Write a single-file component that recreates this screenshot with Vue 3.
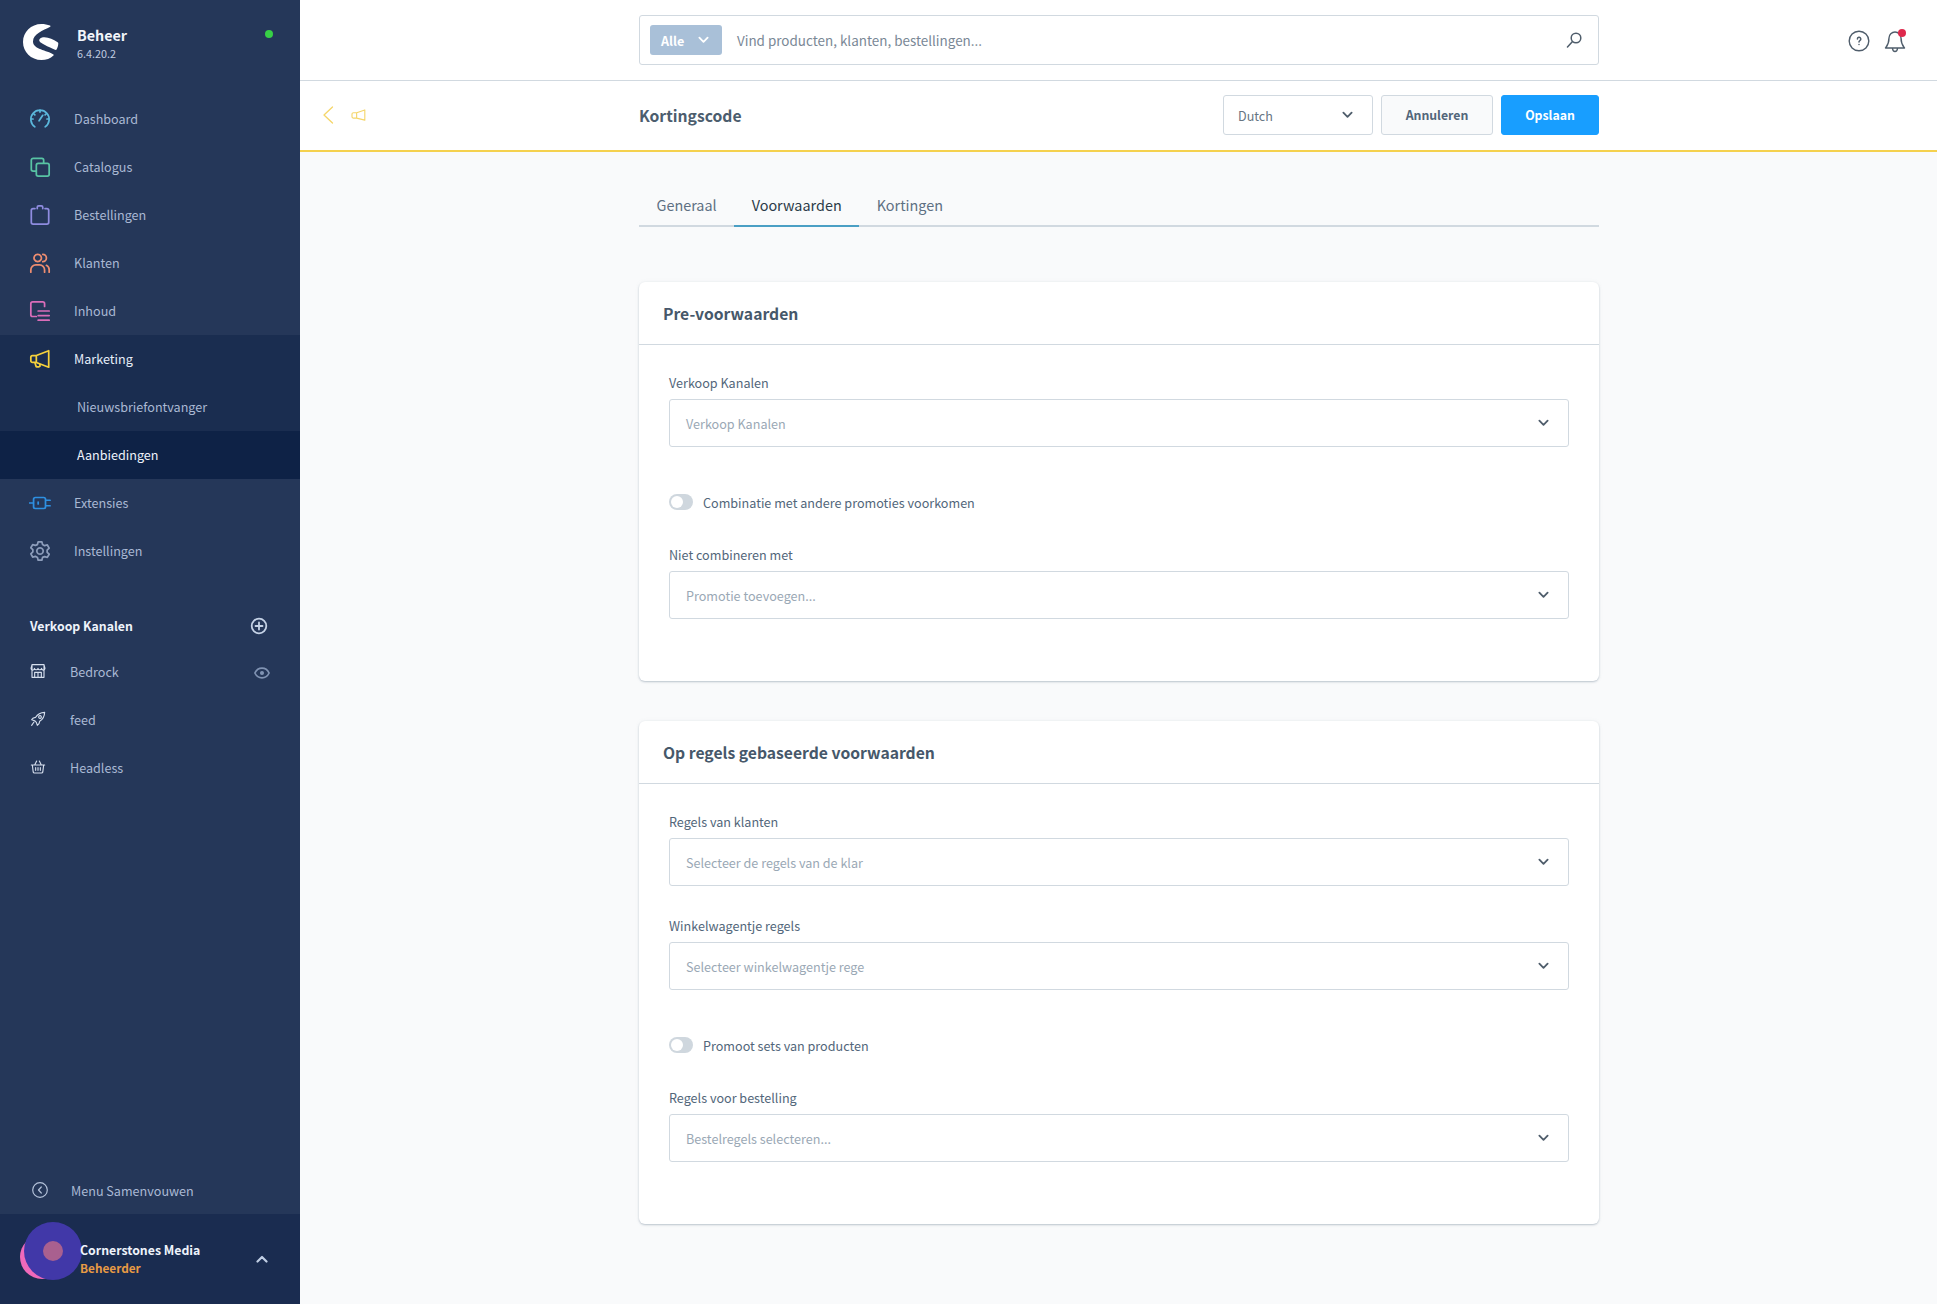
<script setup>
const main = [
  { label: 'Dashboard', color: '#5bb8dc', d: 'M6.4 20.6A10 10 0 1 1 17.6 20.6M12 2v2.4M2.2 12h2.2M19.6 12h2.2M11 14l4-6M5 6l1.4 1.4M19 6l-1.4 1.4' },
  { label: 'Catalogus', color: '#58c4a4', d: 'M7.5 16.5H4.5a2 2 0 0 1-2-2V4.5a2 2 0 0 1 2-2H14a2 2 0 0 1 2 2V7.5M10 8h10a2 2 0 0 1 2 2v10a2 2 0 0 1-2 2H10a2 2 0 0 1-2-2V10a2 2 0 0 1 2-2Z' },
  { label: 'Bestellingen', color: '#8f8ce0', d: 'M6.5 5H4.5a2 2 0 0 0-2 2v13a2 2 0 0 0 2 2h15a2 2 0 0 0 2-2V7a2 2 0 0 0-2-2h-2M9 5V3.5A1.5 1.5 0 0 1 10.500 2h3A1.5 1.5 0 0 1 15 3.500V5' },
  { label: 'Klanten', color: '#ee8d70', d: 'M9.500 2.500a4 4 0 1 0 .01 0ZM2 22v-2.500a5.500 5.500 0 0 1 5.500-5.500h4a5.500 5.500 0 0 1 5.500 5.500v2.500M15 2.500a4 4 0 0 1 0 8M19 14.500a5.500 5.500 0 0 1 3 5v2.500' },
  { label: 'Inhoud', color: '#d96db9', d: 'M8 18H4a2 2 0 0 1-2-2V4a2 2 0 0 1 2-2h11a2 2 0 0 1 2 2v3M10 12h12M10 17h12M10 22h12' },
  { label: 'Marketing', color: '#f5d13c', active: true, d: 'M21.500 3v18L8 15.800V8.200ZM8 8.200H3.800A1.800 1.800 0 0 0 2 10v4a1.800 1.800 0 0 0 1.800 1.800H8M6.500 16l1 3.500a1.500 1.500 0 0 0 1.800 1h1.700a1.500 1.500 0 0 0 1-1.800l-.4-1.200' },
]
const rest = [
  { label: 'Extensies', color: '#2e90e2', d: 'M7 6h9a2 2 0 0 1 2 2v8a2 2 0 0 1-2 2H7a2 2 0 0 1-2-2V8a2 2 0 0 1 2-2ZM0.500 12H5M18 9h5M18 15h5M10 11v2' },
  { label: 'Instellingen', color: '#8d9dbb', d: 'M10 2h4l.8 3 2.200 1.200 3-.8 2 3.500-2.200 2.100v2.400l2.200 2.100-2 3.500-3-.8L14.800 19 14 22h-4l-.8-3-2.200-1.200-3 .8-2-3.500 2.200-2.100v-2.400L2 8.500l2-3.500 3 .8L9.200 5ZM12 8.500a3.500 3.500 0 1 0 .01 0Z' },
]
const channels = [
  { label: 'Bedrock', eye: true, d: 'M3 2.500h18v19H3ZM3 2.500 1.500 8a2.600 2.600 0 0 0 5.200 0 2.700 2.700 0 0 0 5.300 0 2.700 2.700 0 0 0 5.300 0 2.600 2.600 0 0 0 5.200 0L21 2.500M7 21.500V14h10v7.500M12 14v7.500' },
  { label: 'feed', eye: false, d: 'M22 2c-6 .2-10.500 2.500-13.500 7.500L5 10.500 2.500 13l4.500 1.500 2.500 2.500L11 21.500l2.500-2.500 1-3.500C19.500 12.500 21.800 8 22 2ZM6 16.500l-3.500 5M15 7a2 2 0 1 0 .01 0Z' },
  { label: 'Headless', eye: false, d: 'M2 9h20M3.500 9l1.300 10.500a2 2 0 0 0 2 1.500h10.400a2 2 0 0 0 2-1.500L20.500 9M7 9l3-6M17 9l-3-6M8.500 13v4M12 13v4M15.500 13v4' },
]
const cards = [
  {
    title: 'Pre-voorwaarden',
    rows: [
      { label: 'Verkoop Kanalen', placeholder: 'Verkoop Kanalen' },
      { toggle: 'Combinatie met andere promoties voorkomen' },
      { label: 'Niet combineren met', placeholder: 'Promotie toevoegen...' },
    ],
  },
  {
    title: 'Op regels gebaseerde voorwaarden',
    rows: [
      { label: 'Regels van klanten', placeholder: 'Selecteer de regels van de klar' },
      { label: 'Winkelwagentje regels', placeholder: 'Selecteer winkelwagentje rege' },
      { toggle: 'Promoot sets van producten' },
      { label: 'Regels voor bestelling', placeholder: 'Bestelregels selecteren...' },
    ],
  },
]
</script>

<template>
  <div class="page">
    <aside class="sidebar">
      <header class="brand">
        <svg class="logo" viewBox="0 0 36 36" width="36" height="36">
          <path fill="#fff" d="M27 1.600C24.500.5 21.500 0 18.500 0 8 0 0 8 0 18c0 10 8 18 18.500 18 4.500 0 9-1.500 12-4.500.3-.3.300-.700 0-.900C24 26 10 25.500 10 17.500 10 10 20 6.500 27.200 2.800c.5-.3.300-1 -.2-1.200Z"/>
          <path fill="#fff" d="M19 13.500c-2.500.9-3.300 2.500-2.500 3.800 1.500 2.400 8 5 15.500 8.500.6.300 1.200.1 1.500-.4 1-1.700 1.700-3.800 1.800-6 0-.5-.2-.9-.7-1.200-5-3-10-5.700-15.600-4.700Z"/>
        </svg>
        <div class="brand-text">
          <strong>Beheer</strong>
          <span>6.4.20.2</span>
        </div>
        <i class="status"></i>
      </header>

      <nav class="nav">
        <a v-for="item in main" :key="item.label" class="nav-item" :class="{ 'is-open': item.active }">
          <svg class="nav-icon" viewBox="0 0 24 24" fill="none" :stroke="item.color" stroke-width="1.900" stroke-linecap="round" stroke-linejoin="round"><path :d="item.d" /></svg>
          <span>{{ item.label }}</span>
        </a>
        <a class="sub-item">Nieuwsbriefontvanger</a>
        <a class="sub-item is-current">Aanbiedingen</a>
        <a v-for="item in rest" :key="item.label" class="nav-item">
          <svg class="nav-icon" viewBox="0 0 24 24" fill="none" :stroke="item.color" stroke-width="1.900" stroke-linecap="round" stroke-linejoin="round"><path :d="item.d" /></svg>
          <span>{{ item.label }}</span>
        </a>
      </nav>

      <div class="channel-head">
        <strong>Verkoop Kanalen</strong>
        <svg viewBox="0 0 18 18" width="18" height="18" fill="none" stroke="#c5d2e6" stroke-width="1.800" stroke-linecap="round"><circle cx="9" cy="9" r="7.300"/><path d="M9 5.500v7M5.500 9h7"/></svg>
      </div>
      <a v-for="c in channels" :key="c.label" class="channel">
        <svg class="channel-icon" viewBox="0 0 24 24" fill="none" stroke="#d5deed" stroke-width="1.700" stroke-linecap="round" stroke-linejoin="round"><path :d="c.d" /></svg>
        <span>{{ c.label }}</span>
        <svg v-if="c.eye" class="eye" viewBox="0 0 16 12" width="16" height="12" fill="none" stroke="#8093b3" stroke-width="1.700"><path d="M.9 6C2.500 2.700 5 1.200 8 1.200S13.500 2.700 15.100 6C13.500 9.300 11 10.800 8 10.800S2.500 9.300.9 6Z"/><circle cx="8" cy="6" r="1.200" fill="#8093b3"/></svg>
      </a>

      <div class="grow"></div>

      <a class="collapse">
        <svg viewBox="0 0 16 16" width="16" height="16" fill="none" stroke="#b4c2da" stroke-width="1.200" stroke-linecap="round" stroke-linejoin="round"><circle cx="8" cy="8" r="7.300"/><path d="M9.300 5 6.500 8l2.800 3"/></svg>
        <span>Menu Samenvouwen</span>
      </a>
      <footer class="user">
        <div class="avatar"><i class="a-pink"></i><i class="a-purple"></i><i class="a-dot"></i></div>
        <div class="user-text">
          <strong>Cornerstones Media</strong>
          <span>Beheerder</span>
        </div>
        <svg class="up" viewBox="0 0 12 8" width="12" height="8" fill="none" stroke="#c0cee4" stroke-width="2.200" stroke-linecap="round" stroke-linejoin="round"><path d="M1.500 6.500 6 2l4.500 4.500"/></svg>
      </footer>
    </aside>

    <main class="content">
      <div class="topbar">
        <div class="search">
          <span class="alle">Alle
            <svg viewBox="0 0 12 8" width="11" height="8" fill="none" stroke="#fff" stroke-width="2" stroke-linecap="round" stroke-linejoin="round"><path d="M1.500 1.500 6 6l4.500-4.500"/></svg>
          </span>
          <span class="search-text">Vind producten, klanten, bestellingen...</span>
          <svg class="search-icon" viewBox="0 0 16 16" width="16" height="16" fill="none" stroke="#4f5d6b" stroke-width="1.500" stroke-linecap="round"><circle cx="10" cy="6" r="4.800"/><path d="M6.500 9.500 1.500 15"/></svg>
        </div>
        <div class="top-actions">
          <svg viewBox="0 0 22 22" width="22" height="22" fill="none" stroke="#4f5d6b" stroke-width="1.400" stroke-linecap="round"><circle cx="11" cy="11" r="9.800"/><path d="M9.400 9a1.700 1.700 0 1 1 2.500 1.500c-.6.400-.9.700-.9 1.400M11 14.400v.2" stroke-width="1.500"/></svg>
          <div class="bell">
            <svg viewBox="0 0 22 24" width="22" height="24" fill="none" stroke="#4f5d6b" stroke-width="1.400" stroke-linecap="round" stroke-linejoin="round"><path d="M11 3a6 6 0 0 0-6 6c0 6-2 8-3.500 10h19C19 17 17 15 17 9a6 6 0 0 0-6-6ZM8.500 19.500c.2 2 1.200 3 2.500 3s2.300-1 2.500-3"/></svg>
            <i class="badge"></i>
          </div>
        </div>
      </div>

      <div class="smartbar">
        <div class="crumb">
          <svg viewBox="0 0 12 18" width="12" height="18" fill="none" stroke="#f5d66a" stroke-width="1.300" stroke-linecap="round" stroke-linejoin="round"><path d="M10.500 1 2 9l8.500 8"/></svg>
          <svg viewBox="0 0 16 14" width="15" height="13" fill="none" stroke="#f5d66a" stroke-width="1.200" stroke-linejoin="round"><path d="M14.800 1v11L6 9.800V4ZM6 4H2.500A1.500 1.500 0 0 0 1 5.500v2.800a1.500 1.500 0 0 0 1.500 1.500H6"/></svg>
        </div>
        <div class="smart-inner">
          <h1>Kortingscode</h1>
          <div class="lang">Dutch
            <svg viewBox="0 0 12 8" width="11" height="8" fill="none" stroke="#4f5d6b" stroke-width="2" stroke-linecap="round" stroke-linejoin="round"><path d="M1.500 1.500 6 6l4.500-4.500"/></svg>
          </div>
          <button class="btn btn-ghost">Annuleren</button>
          <button class="btn btn-primary">Opslaan</button>
        </div>
      </div>

      <div class="body">
        <div class="tabs">
          <a class="tab">Generaal</a>
          <a class="tab is-active">Voorwaarden</a>
          <a class="tab">Kortingen</a>
        </div>

        <section v-for="card in cards" :key="card.title" class="card">
          <h2>{{ card.title }}</h2>
          <div class="card-body">
            <template v-for="row in card.rows" :key="row.label || row.toggle">
              <div v-if="row.toggle" class="toggle-row">
                <i class="toggle"><b></b></i>
                <span>{{ row.toggle }}</span>
              </div>
              <div v-else class="field">
                <label>{{ row.label }}</label>
                <div class="select">
                  <span>{{ row.placeholder }}</span>
                  <svg viewBox="0 0 12 8" width="11" height="8" fill="none" stroke="#4f5d6b" stroke-width="2" stroke-linecap="round" stroke-linejoin="round"><path d="M1.500 1.500 6 6l4.500-4.500"/></svg>
                </div>
              </div>
            </template>
          </div>
        </section>
      </div>
    </main>
  </div>
</template>

<style>
html, body { margin: 0; }
</style>

<style scoped>
* { box-sizing: border-box; }
.page {
  display: flex;
  width: 1937px;
  height: 1304px;
  overflow: hidden;
  font-family: "Noto Sans CJK SC", "Source Sans Pro", Lato, sans-serif;
  font-size: 12.600px;
  background: #f9fafb;
  color: #52667a;
}
.sidebar {
  width: 300px;
  flex: none;
  display: flex;
  flex-direction: column;
  background: #253759;
  color: #aab9d4;
}
.brand {
  height: 95px;
  padding: 24px 27px 0 23px;
  display: flex;
  align-items: flex-start;
  position: relative;
}
.logo { flex: none; }
.brand-text { margin-left: 18px; display: flex; flex-direction: column; }
.brand-text strong { color: #f2f5fa; font-size: 14.300px; font-weight: 600; line-height: 22px; }
.brand-text span { font-size: 10.800px; line-height: 14px; color: #c0cce0; }
.status { position: absolute; left: 265px; top: 30px; width: 8px; height: 8px; border-radius: 50%; background: #37d046; }
.nav { display: flex; flex-direction: column; }
.nav-item {
  height: 48px;
  display: flex;
  align-items: center;
  padding-left: 29px;
}
.nav-item span { padding-bottom: 1px; }
.nav-icon { width: 22px; height: 22px; flex: none; margin-right: 23px; }
.nav-item.is-open { background: #1a2d50; color: #e6eef9; }
.sub-item {
  height: 48px;
  display: flex;
  align-items: center;
  padding: 0 0 1px 77px;
  background: #1a2d50;
}
.sub-item.is-current { background: #0e2246; color: #eef3fb; }
.channel-head {
  margin-top: 39px;
  height: 24px;
  padding: 0 32px 0 30px;
  display: flex;
  align-items: center;
  justify-content: space-between;
}
.channel-head strong { color: #eef3fb; font-weight: 600; font-size: 12.300px; }
.channel {
  height: 48px;
  display: flex;
  align-items: center;
  padding: 0 30px;
  position: relative;
}
.channel-icon { width: 16px; height: 16px; flex: none; margin-right: 24px; }
.eye { position: absolute; left: 254px; top: 20px; }
.channel-head + .channel { margin-top: 9px; }
.grow { flex: 1; }
.collapse {
  height: 48px;
  display: flex;
  align-items: center;
  padding-left: 32px;
  gap: 23px;
}
.user {
  height: 90px;
  background: #1a2c50;
  display: flex;
  align-items: center;
  position: relative;
  padding-left: 80px;
}
.avatar { position: absolute; left: 0; top: 0; width: 90px; height: 90px; }
.avatar i { position: absolute; border-radius: 50%; }
.a-pink { left: 20px; top: 21px; width: 44px; height: 44px; background: #f069bb; }
.a-purple { left: 24px; top: 8px; width: 58px; height: 58px; background: #4138a8; }
.a-dot { left: 43px; top: 27px; width: 20px; height: 20px; background: #a9608f; }
.user-text { position: relative; display: flex; flex-direction: column; margin-top: -1px; }
.user-text strong { color: #eef3fb; font-weight: 600; font-size: 12.300px; line-height: 17px; }
.user-text span { color: #e89b44; font-size: 11.800px; line-height: 17px; font-weight: 600; }
.up { position: absolute; left: 256px; top: 41px; }

.content { flex: 1; min-width: 0; display: flex; flex-direction: column; }
.topbar {
  height: 81px;
  flex: none;
  background: #fff;
  border-bottom: 1px solid #d1d9e0;
  padding: 15px 0 0 339px;
  display: flex;
  align-items: flex-start;
  position: relative;
}
.search {
  width: 960px;
  height: 50px;
  border: 1px solid #d1d9e0;
  border-radius: 3px;
  display: flex;
  align-items: center;
  padding: 0 16px 0 10px;
  background: #fff;
}
.alle {
  width: 72px;
  height: 30px;
  border-radius: 3px;
  background: #a9c0d8;
  color: #fff;
  font-weight: 600;
  font-size: 12.600px;
  display: flex;
  align-items: center;
  padding-left: 11px;
  gap: 14px;
  flex: none;
}
.search-text { margin-left: 15px; flex: 1; font-size: 13.450px; color: #7a8896; }
.top-actions {
  position: absolute;
  left: 1548px;
  top: 29px;
  display: flex;
  gap: 14px;
  align-items: center;
}
.bell { position: relative; width: 22px; height: 24px; }
.badge { position: absolute; right: 0; top: 0; width: 8px; height: 8px; border-radius: 50%; background: #de294c; }

.smartbar {
  height: 71px;
  flex: none;
  background: #fff;
  border-bottom: 2px solid #f5d14e;
  display: flex;
  align-items: center;
  position: relative;
  padding: 0 0 1px 339px;
}
.crumb {
  position: absolute;
  left: 22px;
  top: 25px;
  display: flex;
  align-items: center;
  gap: 17px;
}
.smart-inner { width: 960px; display: flex; align-items: center; }
h1 { margin: 0 auto 0 0; font-size: 15.700px; font-weight: 600; color: #4c5d6e; }
.lang {
  width: 150px;
  height: 40px;
  border: 1px solid #d1d9e0;
  border-radius: 3px;
  background: #fff;
  display: flex;
  align-items: center;
  justify-content: space-between;
  padding: 0 19px 0 14px;
  color: #677583;
  font-size: 12.600px;
}
.btn {
  height: 40px;
  border-radius: 3px;
  font: inherit;
  font-weight: 600;
  font-size: 12.300px;
  margin-left: 8px;
  padding: 0;
}
.btn-ghost { width: 112px; background: #f9fafb; border: 1px solid #d1d9e0; color: #52667a; }
.btn-primary { width: 98px; background: #189eff; border: 1px solid #189eff; color: #fff; }

.body { flex: 1; padding: 0 0 0 339px; }
.tabs {
  width: 960px;
  height: 75px;
  display: flex;
  align-items: flex-end;
  border-bottom: 2px solid #d1d9e0;
}
.tab {
  height: 48px;
  margin-bottom: -2px;
  padding: 5px 17.500px 0;
  display: flex;
  align-items: center;
  font-size: 14.400px;
  color: #5e7083;
  border-bottom: 2px solid transparent;
}
.tab.is-active { color: #2b3a48; border-bottom-color: #4b9fc4; }
.card {
  width: 960px;
  background: #fff;
  border-radius: 6px;
  box-shadow: 0 1px 2px rgba(120, 138, 155, 0.45), 0 0 4px rgba(120, 138, 155, 0.08);
  margin-top: 55px;
}
.card + .card { margin-top: 40px; }
h2 {
  margin: 0;
  height: 63px;
  padding: 1px 0 0 24px;
  display: flex;
  align-items: center;
  font-size: 15.700px;
  font-weight: 600;
  color: #46586a;
  border-bottom: 1px solid #d1d9e0;
}
.card-body { padding: 30px 30px 62px; }
.field { margin-bottom: 32px; }
.field:last-child { margin-bottom: 0; }
.field label {
  display: block;
  height: 24px;
  line-height: 16px;
  font-size: 12.600px;
  color: #52667a;
}
.select {
  height: 48px;
  border: 1px solid #d1d9e0;
  border-radius: 3px;
  background: #fff;
  display: flex;
  align-items: center;
  justify-content: space-between;
  padding: 0 19px 0 16px;
  color: #9aa8b5;
  font-size: 12.600px;
}
.toggle-row {
  height: 16px;
  margin-top: 47px;
  margin-bottom: 37px;
  display: flex;
  align-items: center;
  gap: 10px;
}
.toggle {
  width: 24px;
  height: 16px;
  border-radius: 8px;
  background: #cfd7de;
  display: block;
  position: relative;
  flex: none;
}
.toggle b { position: absolute; left: 2px; top: 2px; width: 12px; height: 12px; border-radius: 50%; background: #fff; }
.toggle-row span { font-size: 12.600px; color: #52667a; }
</style>
